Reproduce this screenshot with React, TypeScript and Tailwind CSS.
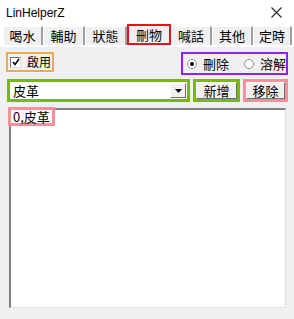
import React from "react";

const F = { fontFamily: '"Noto Sans CJK TC", "Noto Sans", sans-serif' };

function Tab({ label, w, selected }: { label: string; w: string; selected?: boolean }) {
  if (selected) {
    return (
      <div className={`${w} h-[21px] -mt-[1px] border-2 border-[#e8101c] bg-[#f0f0f0] flex items-center justify-center text-[13px] text-black`}>
        {label}
      </div>
    );
  }
  return (
    <div className={`${w} h-[19px] mt-[1px] border-l border-t border-white border-r-2 border-r-[#a0a0a0] bg-[#f0f0f0] flex items-center justify-center text-[13px] text-black`}>
      {label}
    </div>
  );
}

export default function App() {
  return (
    <div className="w-[294px] h-[319px] bg-[#f0f0f0] flex flex-col overflow-hidden" style={F}>
      {/* title bar */}
      <div className="h-[25px] bg-white flex items-center justify-between pl-[6px] pr-[12px] shrink-0">
        <span className="text-[12px] text-black" style={{ fontFamily: '"Liberation Sans", sans-serif' }}>LinHelperZ</span>
        <svg width="11" height="11" viewBox="0 0 11 11">
          <path d="M0.5 0.5 L10.5 10.5 M10.5 0.5 L0.5 10.5" stroke="#222" strokeWidth="1.1" />
        </svg>
      </div>
      {/* tabs */}
      <div className="h-[21px] bg-white flex pl-[3px] shrink-0">
        <Tab label="喝水" w="w-[40px]" />
        <Tab label="輔助" w="w-[42px]" />
        <Tab label="狀態" w="w-[42px]" />
        <Tab label="刪物" w="w-[44px]" selected />
        <Tab label="喊話" w="w-[41px]" />
        <Tab label="其他" w="w-[41px]" />
        <Tab label="定時" w="w-[39px]" />
      </div>
      {/* pane */}
      <div className="flex-1 flex flex-col pt-[5px] pl-[6px] pr-[6px] pb-[11px] border-t border-white">
        <div className="flex justify-between items-start h-[23px]">
          <div className="w-[48px] h-[20px] border-2 border-[#f8a84c] flex items-center pl-[2px] gap-[6px] whitespace-nowrap">
            <div className="shrink-0 w-[11px] h-[11px] bg-white border-l border-t border-[#707070] border-r border-b border-r-[#e0e0e0] border-b-[#e0e0e0] flex items-center justify-center">
              <svg width="8" height="8" viewBox="0 0 8 8">
                <path d="M1 4 L3 6.5 L7 1" stroke="#000" strokeWidth="1.6" fill="none" />
              </svg>
            </div>
            <span className="text-[12px] leading-none text-black">啟用</span>
          </div>
          <div className="w-[107px] h-[23px] border-2 border-[#8f22f0] flex items-center pl-[4px] text-[13px] leading-none text-black whitespace-nowrap">
            <div className="shrink-0 w-[10px] h-[10px] rounded-full bg-white border border-[#909090] flex items-center justify-center">
              <div className="w-[4px] h-[4px] rounded-full bg-black" />
            </div>
            <span className="ml-[6px]">刪除</span>
            <div className="shrink-0 ml-[15px] w-[10px] h-[10px] rounded-full bg-white border border-[#909090]" />
            <span className="ml-[6px]">溶解</span>
          </div>
        </div>
        <div className="flex items-start mt-[4px] h-[23px]">
          <div className="ml-[1px] w-[183px] h-[23px] border-[3px] border-[#78b90a] bg-white flex items-center justify-between pr-[1px]">
            <span className="pl-[3px] text-[13px] leading-none text-black">皮革</span>
            <div className="w-[16px] h-[15px] bg-[#f0f0f0] border-r border-b border-[#707070] border-l border-t border-l-white border-t-white flex items-center justify-center">
              <svg width="7" height="4" viewBox="0 0 7 4"><path d="M0 0 H7 L3.5 4 Z" fill="#000" /></svg>
            </div>
          </div>
          <div className="ml-[3px] w-[47px] h-[23px] border-[3px] border-[#78b90a] bg-[#f0f0f0] flex">
            <div className="flex-1 border-l border-t border-white border-r border-b border-r-[#707070] border-b-[#707070] flex items-center justify-center text-[13px] leading-none text-black">新增</div>
          </div>
          <div className="ml-[3px] w-[45px] h-[23px] border-[3px] border-[#f8909c] bg-[#f0f0f0] flex">
            <div className="flex-1 border-l border-t border-white border-r border-b border-r-[#707070] border-b-[#707070] flex items-center justify-center text-[13px] leading-none text-black">移除</div>
          </div>
        </div>
        <div className="relative mt-[6px] ml-[3px] mr-[2px] flex-1 bg-white border-l-2 border-t-2 border-[#808080] border-r border-b border-r-[#e0e0e0] border-b-[#e0e0e0]">
          <div className="absolute -left-[3px] -top-[3px] w-[47px] h-[19px] border-[3px] border-[#f8909c] bg-white flex items-center pl-[2px] text-[13px] leading-none text-black whitespace-nowrap">
            0,皮革
          </div>
        </div>
      </div>
    </div>
  );
}
